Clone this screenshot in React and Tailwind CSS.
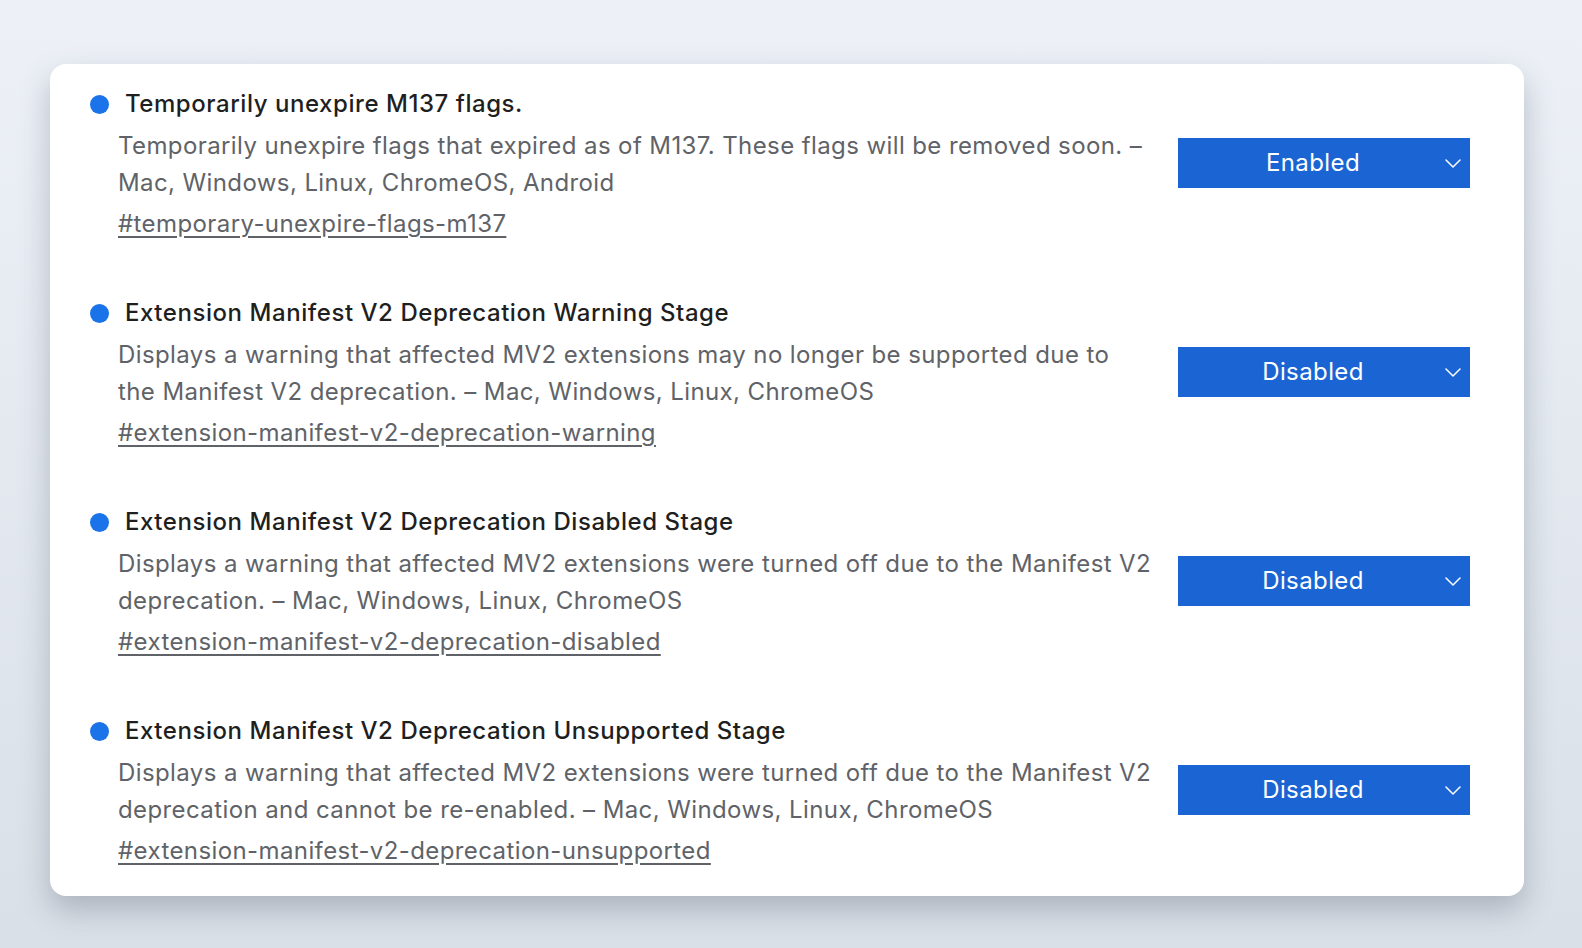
const FLAGS = [
  {
    title: 'Temporarily unexpire M137 flags.',
    lines: [
      'Temporarily unexpire flags that expired as of M137. These flags will be removed soon. –',
      'Mac, Windows, Linux, ChromeOS, Android',
    ],
    hash: '#temporary-unexpire-flags-m137',
    value: 'Enabled',
  },
  {
    title: 'Extension Manifest V2 Deprecation Warning Stage',
    lines: [
      'Displays a warning that affected MV2 extensions may no longer be supported due to',
      'the Manifest V2 deprecation. – Mac, Windows, Linux, ChromeOS',
    ],
    hash: '#extension-manifest-v2-deprecation-warning',
    value: 'Disabled',
  },
  {
    title: 'Extension Manifest V2 Deprecation Disabled Stage',
    lines: [
      'Displays a warning that affected MV2 extensions were turned off due to the Manifest V2',
      'deprecation. – Mac, Windows, Linux, ChromeOS',
    ],
    hash: '#extension-manifest-v2-deprecation-disabled',
    value: 'Disabled',
  },
  {
    title: 'Extension Manifest V2 Deprecation Unsupported Stage',
    lines: [
      'Displays a warning that affected MV2 extensions were turned off due to the Manifest V2',
      'deprecation and cannot be re-enabled. – Mac, Windows, Linux, ChromeOS',
    ],
    hash: '#extension-manifest-v2-deprecation-unsupported',
    value: 'Disabled',
  },
]

function Select({ value }) {
  return (
    <div className="relative mb-[5px] flex h-[50px] w-[292px] shrink-0 items-center justify-center bg-[#1a65d3] pr-[22px] text-[24px] tracking-[0.4px] text-white">
      {value}
      <svg className="absolute right-[8px] top-1/2 h-[10px] w-[18px] -translate-y-1/2"
        viewBox="0 0 18 10" fill="none" stroke="currentColor" strokeWidth={1.5}
        strokeLinecap="round" strokeLinejoin="round">
        <path d="M2 2l7 7 7-7" />
      </svg>
    </div>
  )
}

export default function App() {
  return (
    <div
      className="min-h-[948px] w-full bg-gradient-to-b from-[#edf1f7] to-[#dae0e8] pl-[50px] pt-[64px]"
      style={{ fontFamily: 'Inter, "Noto Sans", sans-serif' }}
    >
      <div className="flex w-[1474px] flex-col gap-[56px] rounded-[16px] bg-white pb-[27px] pl-[40px] pr-[54px] pt-[25px] shadow-[0_14px_30px_rgba(60,72,90,0.3)]">
        {FLAGS.map(flag => (
          <div key={flag.hash} className="flex items-center">
            <div className="min-w-0 flex-1">
              <div className="flex h-[30px] items-center gap-[16px]">
                <span className="h-[19px] w-[19px] rounded-full bg-[#1a73e8]" />
                <span className="text-[24px] font-medium tracking-[0.55px] text-[#1f1f1f]">
                  {flag.title}
                </span>
              </div>
              <div className="ml-[28px] mt-[8px] text-[24px] leading-[37px] tracking-[0.4px] text-[#5f6368]">
                {flag.lines.map(line => (
                  <div key={line} className="whitespace-nowrap">{line}</div>
                ))}
                <a href={flag.hash} className="mt-[4px] block text-[#5f6368] underline underline-offset-[4px]">
                  {flag.hash}
                </a>
              </div>
            </div>
            <Select value={flag.value} />
          </div>
        ))}
      </div>
    </div>
  )
}
